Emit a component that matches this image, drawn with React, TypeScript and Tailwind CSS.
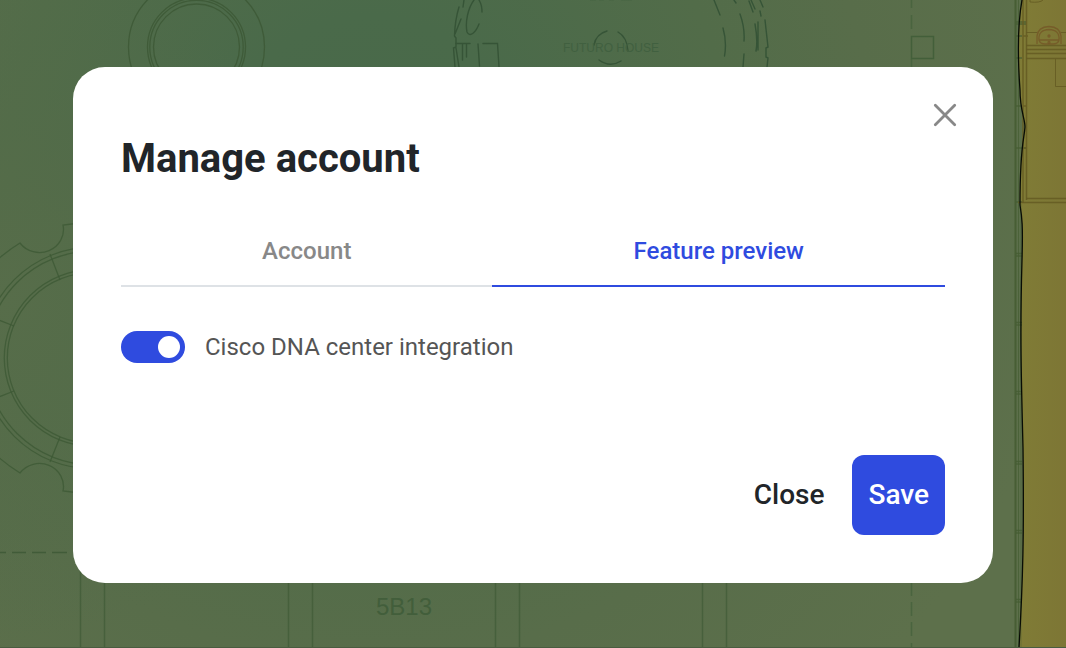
import { useState } from "react";

function FloorPlan() {
  return (
    <svg
      className="absolute inset-0 h-full w-full"
      viewBox="0 0 1066 648"
      preserveAspectRatio="xMidYMid slice"
      fill="none"
      aria-hidden="true"
    >
      <defs>
        <radialGradient id="coverage" gradientUnits="userSpaceOnUse" cx="370" cy="160" r="720">
          <stop offset="0" stopColor="#48694a" />
          <stop offset="0.2" stopColor="#4a6a4a" />
          <stop offset="0.5" stopColor="#526c49" />
          <stop offset="0.7" stopColor="#586d4a" />
          <stop offset="1" stopColor="#5d704b" />
        </radialGradient>
        <radialGradient id="coverageLeft" gradientUnits="userSpaceOnUse" cx="0" cy="300" r="340">
          <stop offset="0" stopColor="#576d4a" />
          <stop offset="0.35" stopColor="#556c49" stopOpacity="0.7" />
          <stop offset="1" stopColor="#526b49" stopOpacity="0" />
        </radialGradient>
        <linearGradient id="weak" x1="0" y1="0" x2="1" y2="0">
          <stop offset="0" stopColor="#807c36" />
          <stop offset="1" stopColor="#7d7635" />
        </linearGradient>
      </defs>
      <rect width="1066" height="648" fill="url(#coverage)" />
      <rect width="400" height="648" fill="url(#coverageLeft)" />

      <g stroke="#3c5834" strokeOpacity="0.8" strokeWidth="1.300">
        <circle cx="196.5" cy="47" r="68" />
        <circle cx="196.5" cy="47" r="49" />
        <circle cx="196.5" cy="47" r="46.7" />
        <circle cx="196.5" cy="47" r="43" />
        <g strokeOpacity="0.75">
          <circle cx="92.6" cy="358" r="85.3" />
          <circle cx="92.6" cy="358" r="88.3" />
          <circle cx="92.6" cy="358" r="106.8" />
          <circle cx="92.6" cy="358" r="110.8" />
          <path d="M-4 261Q7 251 20 243A24 23 0 0 0 63 225L80 223M50 254L60 280M-4 319L14 326" />
          <path d="M-4 455Q7 465 20 473A24 23 0 0 1 63 491L80 493M50 462L60 437M-4 398L14 391" />
        </g>
        <path d="M0 552.5H6M12 552.5H26M32 552.5H46M52 552.5H67" />
      </g>

      <g stroke="#365437" strokeLinecap="round" strokeWidth="1.400">
        <path d="M464 0L463 7M459 7Q455 20 454.500 36M461 19L455 34M454.500 36L456 38V47L453.500 48L455 67M456 48L459 67" />
        <path d="M474 0C468 8 465 22 467 32C470 38 476 32 479 24M479 0Q482 5 482 12" />
        <path d="M456 43.500H470M462.500 44V60M466.500 44V57M478 44L479.500 66M483 43.500H497.500L499 67" />
        <path d="M714 0L720 15M723 28Q727 42 724.500 56M734 0L736 3M740 14Q745 28 744 41M744 54L743 67M749 1L753 12M751 0L755 9M755 24Q758 40 756 51M758 22V50M760 0L763 7M760 11L761 16M765 20L768 47L766 48V57L768 58L767 67" />
        <path d="M594 45Q596 34 607 31M618 32Q627 37 628 51M599 60Q610 68 621 61" />
      </g>
      <text x="563" y="52" fontFamily="Liberation Sans, sans-serif" fontSize="12" fill="#416040">
        FUTURO HOUSE
      </text>
      <path d="M590 0H596M599 0H604M609 0H614M621 0H632" stroke="#3d5b3d" strokeOpacity="0.5" />

      <g stroke="#435f3a" strokeWidth="1.500">
        <path d="M911.500 0V8M911.500 15V29M911.500 59V68M911.500 580V596M911.500 602V616M911.500 622V636M911.500 643V648" strokeOpacity="0.7" />
        <rect x="911.500" y="36.500" width="22" height="22" />
      </g>
      <g stroke="#425d38" strokeOpacity="0.8" strokeWidth="1.500">
        <path d="M80.500 560V648M104.500 580V648M288.500 580V648M312.500 580V648M495.500 580V648M519.500 580V648M702.500 580V648M726.500 580V648" />
      </g>
      <text x="376" y="615" fontFamily="Liberation Sans, sans-serif" fontSize="24" fill="#425e3b">
        5B13
      </text>

      <path
        d="M1022 0C1017 28 1018 62 1020 90C1020 110 1025 119 1025 127C1024 141 1020 145 1020 205C1022 217 1023 225 1022 260C1020 330 1021 370 1023 448C1024 535 1023 580 1019 648H1066V0Z"
        fill="url(#weak)"
      />
      <g stroke="#455c32">
        <path d="M1015.500 0V648" strokeWidth="2" strokeOpacity="0.9" />
        <path d="M1018.500 0V648" strokeOpacity="0.7" />
        <path d="M1021 204V648" strokeOpacity="0.4" />
        <path
          d="M1016 22H1026M1016 24H1026M1016 36H1022M1016 58H1022M1016 106H1022M1016 148H1026M1016 202H1022M1016 253.500H1022M1016 256H1022M1016 322.500H1022M1016 325H1022M1016 391.500H1022M1016 394H1022M1016 461.500H1022M1016 464H1022M1016 530.500H1022M1016 533H1022M1016 599.500H1022M1016 602H1022"
          strokeWidth="1.500"
          strokeOpacity="0.8"
        />
      </g>
      <g stroke="#645b22" strokeOpacity="0.85" strokeWidth="1.500">
        <path d="M1023 0V203M1026.500 0V200M1023 36H1028M1023 106H1027M1023 148H1027" />
        <path d="M1026 45.500H1066M1026 49.500H1066M1026 53.500H1066M1026 58.500H1066" />
        <path d="M1026 198.500H1066M1018 202.500H1066" />
        <path d="M1026 32.500H1037M1061 32.500H1066M1055.500 59V86.500H1066M1030 0V2Q1040 3 1043 0" strokeWidth="1" />
      </g>
      <g stroke="#755a28" strokeOpacity="0.9" strokeWidth="1.300">
        <path d="M1037 44V36Q1038 27 1049 26.500Q1060 27 1061 36V44" />
        <path d="M1039 40Q1038 30 1049 29.500Q1060 30 1059 40ZM1039 40Q1040 44 1045 44H1053Q1058 44 1059 40" />
        <circle cx="1049" cy="36" r="1" />
        <circle cx="1049" cy="42.500" r="1" />
      </g>
      <path
        d="M1022 0C1017 28 1018 62 1020 90C1020 110 1025 119 1025 127C1024 141 1020 145 1020 205C1022 217 1023 225 1022 260C1020 330 1021 370 1023 448C1024 535 1023 580 1019 648"
        stroke="#080c05"
        strokeWidth="1.300"
      />
      <path d="M0 647.500H1066" stroke="#495c40" />
    </svg>
  );
}

const tabBase = "flex-auto cursor-pointer border-b-2 pt-5 pb-[18px] text-2xl leading-8 font-medium";

export default function App() {
  const [tab, setTab] = useState("preview");
  const [enabled, setEnabled] = useState(true);

  return (
    <div className="relative flex min-h-screen items-center justify-center overflow-hidden bg-[#526c49] pt-0.5 font-[Roboto,sans-serif]">
      <FloorPlan />
      <div
        role="dialog"
        aria-modal="true"
        aria-labelledby="dialog-title"
        className="relative mx-4 w-full max-w-[920px] rounded-[32px] bg-white px-12 pt-8 pb-12"
      >
        <div className="-mr-4 flex justify-end">
          <button type="button" aria-label="Close dialog" className="size-8 cursor-pointer text-[#888888]">
            <svg viewBox="0 0 32 32" className="size-8" fill="none" stroke="currentColor" strokeWidth="2.800" strokeLinecap="round">
              <path d="M6.300 6.300L25.700 25.700M25.700 6.300L6.300 25.700" />
            </svg>
          </button>
        </div>

        <h1 id="dialog-title" className="mt-1 text-[40px] leading-12 font-bold text-[#212529]">
          Manage account
        </h1>

        <div role="tablist" className="mt-8 flex">
          <button
            type="button"
            role="tab"
            aria-selected={tab === "account"}
            onClick={() => setTab("account")}
            className={`${tabBase} ${tab === "account" ? "border-[#2f4bdf] text-[#2f4bdf]" : "border-[#dee2e6] text-[#888888]"}`}
          >
            Account
          </button>
          <button
            type="button"
            role="tab"
            aria-selected={tab === "preview"}
            onClick={() => setTab("preview")}
            className={`${tabBase} ${tab === "preview" ? "border-[#2f4bdf] text-[#2f4bdf]" : "border-[#dee2e6] text-[#888888]"}`}
          >
            Feature preview
          </button>
        </div>

        <label className="mt-11 flex cursor-pointer items-center gap-5 text-2xl leading-8 text-[#555555]">
          <input
            type="checkbox"
            role="switch"
            checked={enabled}
            onChange={(e) => setEnabled(e.target.checked)}
            className="flex h-8 w-16 shrink-0 cursor-pointer appearance-none items-center rounded-full bg-[#adb5bd] px-[5px] before:size-[22px] before:rounded-full before:bg-white before:content-[''] checked:justify-end checked:bg-[#2f4bdf]"
          />
          Cisco DNA center integration
        </label>

        <div className="mt-[92px] flex justify-end gap-3">
          <button type="button" className="h-20 cursor-pointer rounded-xl px-4 text-[28px] font-medium text-[#212529]">
            Close
          </button>
          <button type="button" className="h-20 cursor-pointer rounded-xl bg-[#2f4bdf] px-4 text-[28px] font-medium text-white">
            Save
          </button>
        </div>
      </div>
    </div>
  );
}
